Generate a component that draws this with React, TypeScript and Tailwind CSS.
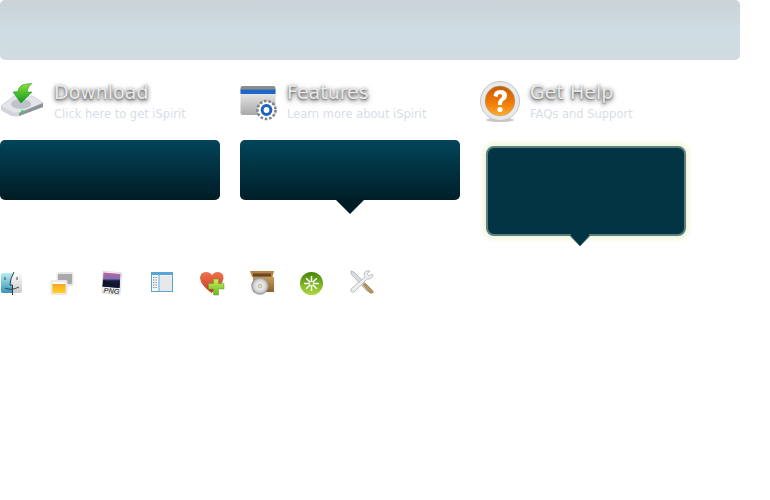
import type { ReactNode } from 'react';

function DriveIcon() {
  return (
    <svg width="44" height="36" viewBox="0 0 44 36">
      <defs>
        <linearGradient id="dr" x1="0" y1="0" x2="0" y2="1">
          <stop offset="0" stopColor="#f4f5f7" />
          <stop offset="1" stopColor="#a9adb4" />
        </linearGradient>
        <linearGradient id="ar" x1="0" y1="0" x2="0" y2="1">
          <stop offset="0" stopColor="#8fe03a" />
          <stop offset="1" stopColor="#0c9a1c" />
        </linearGradient>
      </defs>
      <path d="M1 23 L14 13 H33 L43 20 V24 L19 33 Q14 34 10 32 L1 27 Z" fill="url(#dr)" />
      <path d="M1 23 L13 30 L19 30 L43 20 L33 13 H14 Z" fill="#e3e5e9" stroke="#bcc0c6" strokeWidth="0.5" />
      <path d="M19 30 L43 20 V24 L19 33 Z" fill="#8d929a" />
      <path d="M1 23 L13 30 L19 30 V33 Q14 34 10 32 L1 27 Z" fill="#d2d5da" />
      <ellipse cx="21" cy="21" rx="10" ry="5" fill="#bfc3c9" />
      <circle cx="22.5" cy="28.5" r="1.4" fill="#35d651" />
      <path d="M22 2 Q27 0.5 32 0.5 Q28 3 27 9 L32 9 L21 20 L13 9 L18 8.5 Q18.5 4 22 2 Z" fill="url(#ar)" stroke="#0d8a1b" strokeWidth="0.5" />
    </svg>
  );
}

function PanelIcon() {
  return (
    <svg width="38" height="36" viewBox="0 0 38 36">
      <defs>
        <linearGradient id="pn" x1="0" y1="0" x2="0" y2="1">
          <stop offset="0" stopColor="#fafafa" />
          <stop offset="1" stopColor="#a8a8a8" />
        </linearGradient>
      </defs>
      <rect x="0.5" y="1" width="35" height="29" rx="2.5" fill="url(#pn)" />
      <rect x="0.5" y="1" width="35" height="6" rx="2" fill="#8d8d8d" />
      <rect x="0.5" y="4.5" width="35" height="4.5" fill="#1e66c9" />
      <circle cx="26.5" cy="25" r="9" fill="#fff" stroke="#7f8388" strokeWidth="2.6" strokeDasharray="2.6 1.8" />
      <circle cx="26.5" cy="25" r="6.8" fill="#fff" />
      <circle cx="26.5" cy="25" r="4.4" fill="none" stroke="#1f62c4" strokeWidth="3" />
    </svg>
  );
}

function HelpIcon() {
  return (
    <svg width="40" height="42" viewBox="0 0 40 42">
      <defs>
        <linearGradient id="hp" x1="0" y1="0" x2="0" y2="1">
          <stop offset="0" stopColor="#c95a00" />
          <stop offset="0.55" stopColor="#ee7b07" />
          <stop offset="1" stopColor="#ffab2e" />
        </linearGradient>
      </defs>
      <ellipse cx="20" cy="39" rx="14" ry="2" fill="#c8c8c8" />
      <circle cx="20" cy="20" r="19.5" fill="#e9e9e9" stroke="#c4c4c4" />
      <circle cx="20" cy="20" r="15" fill="url(#hp)" stroke="#a9a9a9" strokeWidth="0.5" />
      <path d="M13.5 15 Q14 9 20 9 Q27 9 27 14.5 Q27 18 23 20 Q22 21 22 24 H18 Q17.5 19.5 20.5 17.5 Q22.5 16 22 14.5 Q21.5 13 20 13 Q18 13 17.5 16 Z" fill="#fff" />
      <circle cx="20" cy="28.5" r="2.6" fill="#fff" />
    </svg>
  );
}

function FinderIcon() {
  return (
    <svg width="24" height="26" viewBox="0 0 24 26">
      <defs>
        <linearGradient id="fl" x1="0" y1="0" x2="0" y2="1">
          <stop offset="0" stopColor="#b4ecf2" />
          <stop offset="1" stopColor="#3795b8" />
        </linearGradient>
        <linearGradient id="fr" x1="0" y1="0" x2="0" y2="1">
          <stop offset="0" stopColor="#fbfbfb" />
          <stop offset="1" stopColor="#c9ccd0" />
        </linearGradient>
      </defs>
      <rect x="1" y="3" width="21" height="20" rx="2" fill="url(#fr)" />
      <path d="M3 3 H13 Q10 10 10 15 H12 V23 H3 Q1 23 1 21 V5 Q1 3 3 3 Z" fill="url(#fl)" />
      <path d="M14 2 Q10 9 10 15 H12.5 V25" fill="none" stroke="#33383e" strokeWidth="1" />
      <path d="M5 7 V10 M17 7 V10 M5 18 Q11 21 19 17" fill="none" stroke="#33383e" strokeWidth="0.9" />
    </svg>
  );
}

function WindowsIcon() {
  return (
    <svg width="24" height="26" viewBox="0 0 24 26">
      <defs>
        <linearGradient id="wb" x1="0" y1="0" x2="0" y2="1">
          <stop offset="0" stopColor="#f5a623" />
          <stop offset="1" stopColor="#ffd21f" />
        </linearGradient>
      </defs>
      <rect x="6.5" y="2" width="17" height="14" rx="2.5" fill="#e6e6e6" />
      <rect x="8" y="4" width="14" height="10" rx="1" fill="#a9a9a9" />
      <rect x="0.5" y="10" width="17" height="15" rx="2" fill="#e9e9e9" />
      <rect x="2.5" y="14" width="13" height="9" fill="url(#wb)" />
      <rect x="2.5" y="12" width="13" height="2" fill="#f9f9f9" />
    </svg>
  );
}

function PngIcon() {
  return (
    <svg width="24" height="26" viewBox="0 0 24 26">
      <defs>
        <linearGradient id="pg" x1="0" y1="0" x2="0" y2="1">
          <stop offset="0" stopColor="#c85d9d" />
          <stop offset="0.4" stopColor="#7d73b4" />
          <stop offset="0.55" stopColor="#111735" />
          <stop offset="1" stopColor="#33307a" />
        </linearGradient>
      </defs>
      <path d="M3 1 L22 3 L20 25 L2 23 Z" fill="#f4f4f4" stroke="#c9c9c9" strokeWidth="0.5" />
      <path d="M3.5 2.5 L20.5 4 L19.5 18 L2.5 16.5 Z" fill="url(#pg)" />
      <path d="M2.5 16.5 L3.5 10 L12 13 L19.8 13 L19.5 18 Z" fill="#10152e" />
      <text x="3.5" y="23.5" fontSize="7.5" fontWeight="700" fontStyle="italic" fill="#5a5a5a" fontFamily="Liberation Sans, sans-serif" transform="rotate(5 12 20)">PNG</text>
    </svg>
  );
}

function SidebarIcon() {
  return (
    <svg width="24" height="26" viewBox="0 0 24 26">
      <rect x="1.5" y="2.5" width="21" height="19" fill="#f4f6f8" stroke="#5aa5d6" />
      <rect x="1" y="2" width="22" height="3" fill="#5aa5d6" />
      <rect x="8.5" y="5" width="1" height="17" fill="#5aa5d6" />
      <rect x="10" y="6" width="12" height="15" fill="#e6e8ea" />
      <path d="M3 7.5 H7 M3 10 H7 M3 12.5 H7 M3 15 H7 M3 17.5 H7" stroke="#7a8b98" strokeWidth="1" strokeDasharray="1 0.6" />
    </svg>
  );
}

function HeartIcon() {
  return (
    <svg width="26" height="26" viewBox="0 0 26 26">
      <defs>
        <linearGradient id="ht" x1="0" y1="0" x2="0" y2="1">
          <stop offset="0" stopColor="#f0724f" />
          <stop offset="1" stopColor="#c23c1f" />
        </linearGradient>
        <linearGradient id="pl" x1="0" y1="0" x2="0" y2="1">
          <stop offset="0" stopColor="#c7ef62" />
          <stop offset="1" stopColor="#6bb81f" />
        </linearGradient>
      </defs>
      <path d="M11.5 23 Q0.5 15 0 8 Q0.5 2 6 2 Q10 2 12 5 Q14 2 18 2 Q23.5 2.5 23.5 8 Q23 15 11.5 23 Z" fill="url(#ht)" />
      <path d="M13.5 9 H18.5 V13.5 H24 V19 H18.5 V25 H13.5 V19 H8.5 V13.5 H13.5 Z" fill="url(#pl)" stroke="#5e9e1c" strokeWidth="0.5" />
    </svg>
  );
}

function BoxIcon() {
  return (
    <svg width="26" height="26" viewBox="0 0 26 26">
      <defs>
        <linearGradient id="bx" x1="0" y1="0" x2="0" y2="1">
          <stop offset="0" stopColor="#c99a5a" />
          <stop offset="1" stopColor="#8d5f2c" />
        </linearGradient>
        <radialGradient id="cd">
          <stop offset="0.2" stopColor="#f4f4f4" />
          <stop offset="0.7" stopColor="#d4d4d4" />
          <stop offset="1" stopColor="#9a9a9a" />
        </radialGradient>
      </defs>
      <path d="M0 1 H24 L22.5 7 H2 Z" fill="#b5854a" />
      <rect x="3" y="3.5" width="18" height="3" fill="#6b4620" />
      <rect x="3" y="7" width="21" height="15" fill="url(#bx)" />
      <circle cx="10" cy="16" r="8.5" fill="url(#cd)" stroke="#8a8a8a" strokeWidth="0.5" />
      <circle cx="10" cy="16" r="2" fill="#e8d9a8" stroke="#9a9a9a" strokeWidth="0.5" />
    </svg>
  );
}

function GreenIcon() {
  return (
    <svg width="24" height="26" viewBox="0 0 24 26">
      <defs>
        <linearGradient id="gr" x1="0" y1="0" x2="0" y2="1">
          <stop offset="0" stopColor="#438507" />
          <stop offset="1" stopColor="#b0da3e" />
        </linearGradient>
      </defs>
      <circle cx="11.5" cy="13.5" r="11.5" fill="url(#gr)" />
      <path d="M11.5 6 V21 M4 13.5 H19 M6.2 8.2 L16.8 18.8 M16.8 8.2 L6.2 18.8" stroke="#fff" strokeWidth="1.5" />
      <circle cx="11.5" cy="13.5" r="1.8" fill="#86bd2c" />
    </svg>
  );
}

function ToolsIcon() {
  return (
    <svg width="24" height="26" viewBox="0 0 24 26">
      <path d="M1 1 L4 2 L21 19 L20 22 L17 21 L1 4 Z" fill="#d9dbdd" stroke="#9a9da1" strokeWidth="0.6" />
      <path d="M20 1 Q15 0 14 4 Q14 6 15 7 L1 19 Q0 23 4 22 L17 9 Q21 10 23 6 L22 4 L19 6 L17 4 Z" fill="#eceef0" stroke="#9a9da1" strokeWidth="0.6" />
      <path d="M13 15 L15 13 L23 21 Q24 24 20 23 Z" fill="#b9965f" stroke="#8a6c3d" strokeWidth="0.5" />
    </svg>
  );
}

function Heading({ icon, title, sub, iconClass }: { icon: ReactNode; title: string; sub: string; iconClass: string }) {
  return (
    <div className="flex h-[60px] items-start">
      <div className={iconClass}>{icon}</div>
      <div>
        <div className="h-[25px] text-[19px] leading-[25px] text-[#e9e9e9] [text-shadow:0_2px_5px_rgba(0,0,0,0.75),0_1px_2px_rgba(0,0,0,0.45)]">{title}</div>
        <div className="mt-[2px] text-[11.5px] leading-[15px] text-[#d8dde8]">{sub}</div>
      </div>
    </div>
  );
}

const sideIcons = [FinderIcon, WindowsIcon, PngIcon, SidebarIcon, HeartIcon, BoxIcon, GreenIcon, ToolsIcon];

export default function App() {
  return (
    <div className="h-[500px] w-[770px] overflow-hidden bg-white [font-family:'DejaVu_Sans',sans-serif]">
      <div className="h-[60px] w-[740px] rounded-[5px] bg-gradient-to-b from-[#c9d3d8] via-[#cedce3] to-[#cfdbe1]" />

      <div className="mt-[20px] flex h-[60px]">
        <div className="w-[240px]">
          <Heading icon={<DriveIcon />} title="Download" sub="Click here to get iSpirit" iconClass="w-[54px] shrink-0 pt-[3px]" />
        </div>
        <div className="w-[240px]">
          <Heading icon={<PanelIcon />} title="Features" sub="Learn more about iSpirit" iconClass="w-[47px] shrink-0 pt-[5px]" />
        </div>
        <div className="w-[240px]">
          <Heading icon={<HelpIcon />} title="Get Help" sub="FAQs and Support" iconClass="w-[50px] shrink-0 pt-[1px]" />
        </div>
      </div>

      <div className="flex h-[130px]">
        <div className="w-[240px]">
          <div className="h-[60px] w-[220px] rounded-[5px] bg-gradient-to-b from-[#03455a] to-[#001c24]" />
        </div>
        <div className="w-[240px]">
          <div className="h-[60px] w-[220px] rounded-[5px] bg-gradient-to-b from-[#03455a] to-[#001f28]" />
          <svg className="-mt-px ml-[95px] block" width="30" height="15" viewBox="0 0 30 15">
            <path d="M0 0 H30 L15 15 Z" fill="#001c24" />
          </svg>
        </div>
        <div className="w-[240px] pl-[6px] pt-[6px]">
          <div className="h-[90px] w-[200px] rounded-[8px] border-2 border-[#5e7f82] bg-[#023443] shadow-[0_0_5px_3px_#eff6d8]" />
          <svg className="-mt-[2px] ml-[83px] block" width="22" height="13" viewBox="0 0 22 13">
            <path d="M0.5 1 L11 12 L21.5 1" fill="#023443" stroke="#5e7f82" strokeWidth="1" />
            <rect x="2" y="0" width="18" height="2" fill="#023443" />
          </svg>
        </div>
      </div>

      <div className="flex">
        {sideIcons.map((Icon, i) => (
          <div key={i} className="h-[26px] w-[50px]">
            <Icon />
          </div>
        ))}
      </div>
    </div>
  );
}
